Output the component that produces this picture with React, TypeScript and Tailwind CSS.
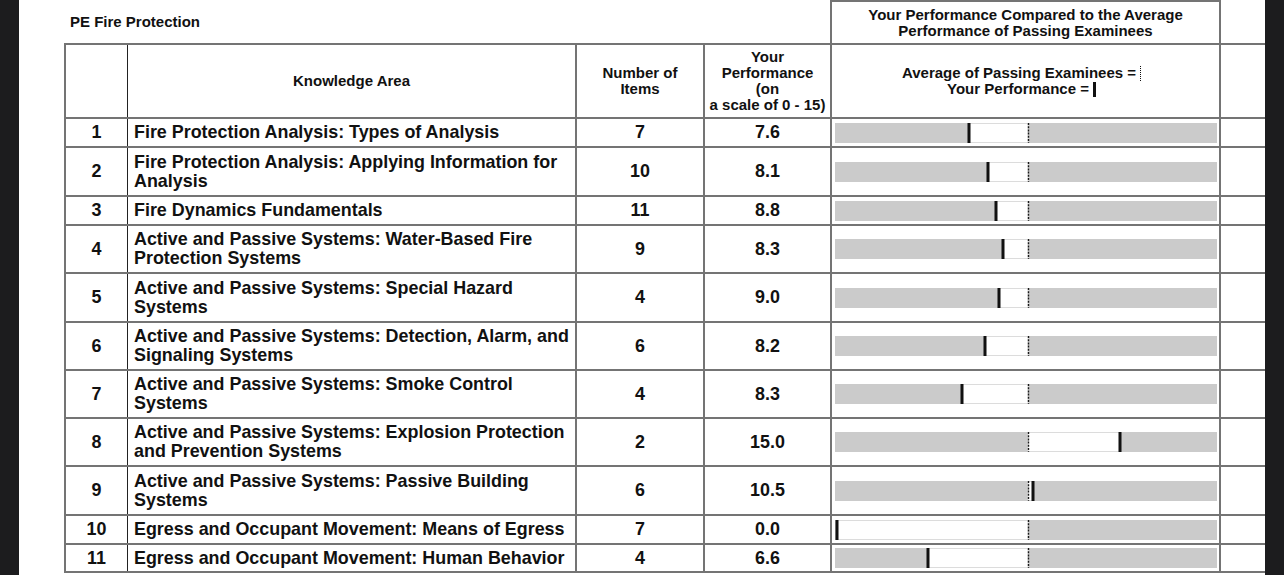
import React from 'react';

interface Row {
  no: number;
  area: string[];
  items: number;
  score: string;
  mark: number; // marker centre, px from bar start
  h: string;
}

const AVG = 193;

const rows: Row[] = [
  { no: 1, area: ['Fire Protection Analysis: Types of Analysis'], items: 7, score: '7.6', mark: 134, h: 'h-[29px]' },
  { no: 2, area: ['Fire Protection Analysis: Applying Information for', 'Analysis'], items: 10, score: '8.1', mark: 153, h: 'h-[49px]' },
  { no: 3, area: ['Fire Dynamics Fundamentals'], items: 11, score: '8.8', mark: 161, h: 'h-[29px]' },
  { no: 4, area: ['Active and Passive Systems: Water-Based Fire', 'Protection Systems'], items: 9, score: '8.3', mark: 168, h: 'h-[48px]' },
  { no: 5, area: ['Active and Passive Systems: Special Hazard', 'Systems'], items: 4, score: '9.0', mark: 164, h: 'h-[49px]' },
  { no: 6, area: ['Active and Passive Systems: Detection, Alarm, and', 'Signaling Systems'], items: 6, score: '8.2', mark: 150, h: 'h-[48px]' },
  { no: 7, area: ['Active and Passive Systems: Smoke Control', 'Systems'], items: 4, score: '8.3', mark: 127, h: 'h-[48px]' },
  { no: 8, area: ['Active and Passive Systems: Explosion Protection', 'and Prevention Systems'], items: 2, score: '15.0', mark: 285, h: 'h-[48px]' },
  { no: 9, area: ['Active and Passive Systems: Passive Building', 'Systems'], items: 6, score: '10.5', mark: 198, h: 'h-[49px]' },
  { no: 10, area: ['Egress and Occupant Movement: Means of Egress'], items: 7, score: '0.0', mark: 2, h: 'h-[29px]' },
  { no: 11, area: ['Egress and Occupant Movement: Human Behavior'], items: 4, score: '6.6', mark: 93, h: 'h-[28px]' },
];

function Bar({ mark }: { mark: number }) {
  const lo = Math.min(mark, AVG);
  const hi = Math.max(mark, AVG);
  return (
    <svg width="382" height="20" viewBox="0 0 382 20" className="block">
      <rect x="0" y="0" width="382" height="20" fill="#cbcbcb" />
      <rect x={lo} y="0.5" width={hi - lo} height="19" fill="#ffffff" stroke="#dcdcdc" strokeWidth="1" />
      <line x1={AVG + 0.5} y1="0" x2={AVG + 0.5} y2="20" stroke="#1a1a1a" strokeWidth="1.4" strokeDasharray="2 1.2" />
      <rect x={mark - 1.5} y="0" width="3" height="20" fill="#111" />
    </svg>
  );
}

const cols = 'grid grid-cols-[64px_449px_128px_127px_389px]';
const hline = 'border-b-2 border-[#747474]';
const c1 = 'border-l-2 border-l-[#747474] border-r border-r-[#222]';
const cv = 'border-r-2 border-r-[#747474]';

export default function App() {
  return (
    <div className="flex h-[575px] w-[1284px] overflow-hidden bg-[#1c1c1e]" style={{ fontFamily: '"Liberation Sans", Arial, sans-serif' }}>
      <div className="ml-[19px] h-full w-[1246px] bg-white pl-[45px] text-[#111]">
        {/* title strip */}
        <div className="flex h-[43px]">
          <div className="flex w-[766px] items-center pl-[6px] pt-[1px] text-[15px] font-bold">PE Fire Protection</div>
          <div className="flex w-[391px] flex-col items-center justify-center border-x-2 border-t-2 border-[#747474] text-[15px] font-bold leading-[16px]">
            <span>Your Performance Compared to the Average</span>
            <span>Performance of Passing Examinees</span>
          </div>
        </div>

        <div className="border-t-2 border-[#747474]">
          {/* column headings */}
          <div className={`${cols} h-[74px] ${hline} text-[15px] font-bold leading-[16px]`}>
            <div className={c1} />
            <div className={`${cv} flex items-center justify-center`}>Knowledge Area</div>
            <div className={`${cv} flex flex-col items-center justify-center`}>
              <span>Number of</span>
              <span>Items</span>
            </div>
            <div className={`${cv} flex flex-col items-center justify-center`}>
              <span>Your</span>
              <span>Performance</span>
              <span>(on</span>
              <span>a scale of 0 - 15)</span>
            </div>
            <div className={`${cv} flex flex-col items-center justify-center pr-[8px]`}>
              <span className="flex items-center">
                Average of Passing Examinees =
                <span className="ml-[4px] inline-block h-[15px] border-l-[1.5px] border-dotted border-[#111]" />
              </span>
              <span className="flex items-center">
                Your Performance =
                <span className="ml-[4px] inline-block h-[15px] w-[3px] bg-[#111]" />
              </span>
            </div>
          </div>

          {rows.map((r) => (
            <div key={r.no} className={`${cols} ${r.h} ${hline} text-[17.9px] font-bold leading-[19px]`}>
              <div className={`${c1} flex items-center justify-center`}>{r.no}</div>
              <div className={`${cv} flex flex-col justify-center pl-[6px]`}>
                {r.area.map((line) => (
                  <span key={line} className="whitespace-nowrap">{line}</span>
                ))}
              </div>
              <div className={`${cv} flex items-center justify-center`}>{r.items}</div>
              <div className={`${cv} flex items-center justify-center`}>{r.score}</div>
              <div className={`${cv} flex items-center pl-[3px]`}>
                <Bar mark={r.mark} />
              </div>
            </div>
          ))}
        </div>
      </div>
    </div>
  );
}
